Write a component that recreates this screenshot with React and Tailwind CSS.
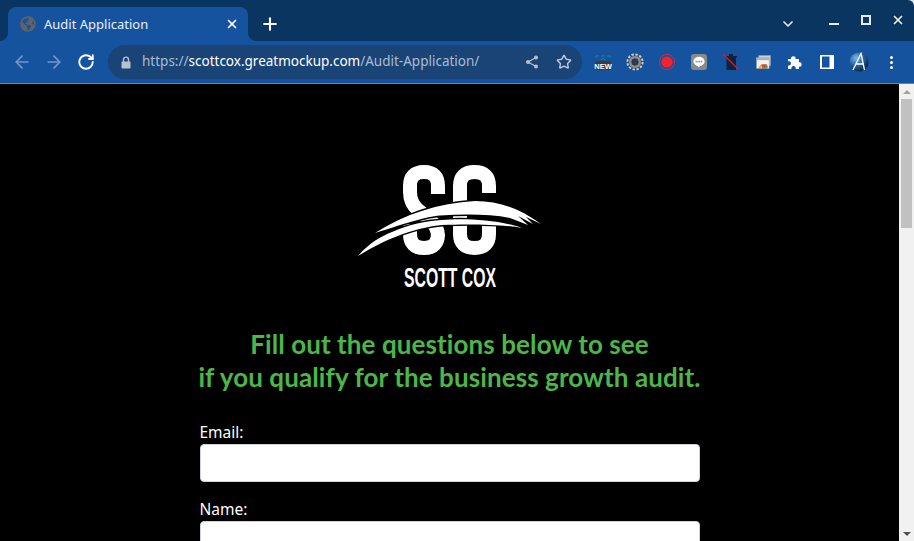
import React from 'react'
import { ArrowLeft, ArrowRight, RotateCw, Star, X, Plus, ChevronDown } from 'lucide-react'
import { FaGlobeAmericas } from 'react-icons/fa'

const uiFont = 'font-["Noto_Sans",sans-serif]'

const LockIcon = () => (
  <svg width="10" height="13" viewBox="0 0 10 13">
    <path d="M2.5 6V3.6a2.5 2.5 0 0 1 5 0V6" fill="none" stroke="#b6c2d2" strokeWidth="1.4" />
    <rect x="0.5" y="5.5" width="9" height="7" rx="1" fill="#b6c2d2" />
  </svg>
)

const ShareIcon = () => (
  <svg width="14" height="14" viewBox="0 0 14 14">
    <path d="M11 2.5 3 7l8 4.5" fill="none" stroke="#b6c2d2" strokeWidth="1.3" />
    <circle cx="11" cy="2.5" r="2" fill="#b6c2d2" />
    <circle cx="3" cy="7" r="2" fill="#b6c2d2" />
    <circle cx="11" cy="11.5" r="2" fill="#b6c2d2" />
  </svg>
)

const NewBadge = () => (
  <svg width="18" height="18" viewBox="0 0 18 18">
    <path d="M2 3h3M7 3h4M13 3h3M2 3v2M16 3v2M7 7l2-2 2 2" stroke="#1f7f9f" strokeWidth="1" fill="none" />
    <rect x="1" y="8" width="16" height="9" fill="#3c3c3c" />
    <text x="9" y="15.5" textAnchor="middle" fontSize="7.5" fontWeight="700" fill="#fff" fontFamily="Liberation Sans, sans-serif">NEW</text>
  </svg>
)

const Gear = () => (
  <svg width="18" height="18" viewBox="0 0 18 18">
    <circle cx="9" cy="9" r="6.5" fill="#8f8f8f" stroke="#444" strokeWidth="1" />
    <circle cx="9" cy="9" r="7.6" fill="none" stroke="#c8c8c8" strokeWidth="2" strokeDasharray="2.4 1.6" />
    <circle cx="9" cy="9" r="3.2" fill="#1d3f6a" stroke="#333" strokeWidth="1" />
  </svg>
)

const RecordDot = () => (
  <svg width="18" height="18" viewBox="0 0 18 18">
    <circle cx="9" cy="9" r="7.6" fill="none" stroke="#d8283a" strokeWidth="1" />
    <circle cx="9" cy="9" r="5.6" fill="#f5222d" />
  </svg>
)

const LineChat = () => (
  <svg width="16" height="16" viewBox="0 0 16 16">
    <rect width="16" height="16" rx="3" fill="#8a8a8a" />
    <ellipse cx="8" cy="7.4" rx="5.6" ry="4.6" fill="#fff" />
    <path d="M6.5 11l1 2.6 2.6-2.8z" fill="#fff" />
    <path d="M4.6 7.6h6.8" stroke="#8a8a8a" strokeWidth="1.6" strokeDasharray="1.2 .6" />
  </svg>
)

const TrashOff = () => (
  <svg width="18" height="18" viewBox="0 0 18 18">
    <path d="M4.5 4.5h9.5V17H4.5z M3 3h12v1.6H3z M7 1h4v2H7z" fill="#0f2238" />
    <path d="M1 1l15.5 15.5" stroke="#f01030" strokeWidth="1.2" />
  </svg>
)

const ChromeWindows = () => (
  <svg width="15" height="14" viewBox="0 0 16 15">
    <rect x="3" y="0.5" width="12.5" height="11" fill="#cfcfcf" stroke="#999" strokeWidth=".5" />
    <rect x="0.5" y="3" width="13.5" height="11.5" fill="#f2f2f2" stroke="#9a9a9a" strokeWidth=".5" />
    <rect x="0.5" y="3" width="13.5" height="2.5" fill="#aab4bd" />
    <path d="M3.5 14.5a4 4 0 0 1 4-4.6l3.8.1a4 4 0 0 1 .2 4.5z" fill="#e3402f" />
    <path d="M3.5 14.5a4 4 0 0 1 2-4l2 4z" fill="#f4c20d" />
    <path d="M8.5 14.5l2.8-4.4a4 4 0 0 1 .6 4.4z" fill="#3aa757" />
    <circle cx="7.7" cy="13.9" r="1.4" fill="#4a90e2" />
  </svg>
)

const PuzzleIcon = () => (
  <svg width="16" height="16" viewBox="0 0 16 16">
    <path d="M1 5h3.2a2.2 2.2 0 1 1 4.3 0H12v3.3a2.2 2.2 0 1 1 0 4.3V15H8.6a2.2 2.2 0 1 0-4.1 0H1v-3.6a2.2 2.2 0 1 0 0-4.1z" fill="#fff" />
  </svg>
)

const SidePanel = () => (
  <svg width="14" height="14" viewBox="0 0 14 14">
    <path d="M0 0h14v14H0z M2 1.5v11h7.5v-11z" fill="#fff" fillRule="evenodd" />
  </svg>
)

const Avatar = () => (
  <svg width="20" height="20" viewBox="0 0 20 20">
    <defs>
      <radialGradient id="globe" cx="35%" cy="30%" r="75%">
        <stop offset="0%" stopColor="#7fb6e6" />
        <stop offset="55%" stopColor="#1f5f9f" />
        <stop offset="100%" stopColor="#0d2238" />
      </radialGradient>
    </defs>
    <circle cx="10" cy="10" r="9.6" fill="url(#globe)" />
    <path d="M4 18 12 1.5 15.5 18M7.5 12h7.5" stroke="#fff" strokeWidth="1.3" fill="none" />
  </svg>
)

const Logo = () => (
  <svg width="200" height="138" viewBox="0 0 200 138" className="block shrink-0">
    <g fill="none" stroke="#fff" strokeWidth="14">
      <path d="M88 34V26Q88 12 74 12Q60 12 60 26V32Q60 43 68 50L80 60Q88 67 88 76V74Q88 88 74 88Q60 88 60 74V64" />
      <path d="M139 33V26Q139 12 124.5 12Q110 12 110 26V74Q110 88 124.5 88Q139 88 139 74V64" />
    </g>
    <g fill="#fff" stroke="#000" strokeWidth="3" paintOrder="stroke">
      <path d="M25 73C55 54 88 43 125 41C150 41 170 49 191 64L176 57L183 64L168 56L178 65L160 58C140 54 115 54 90 55.500C75 57 60 62 25 73Z" />
      <path d="M8 96C20 82 32 76 42 72C60 64 75 61 92 60C115 58 150 60 172 68C150 64 115 64 92 65C70 67 40 76 8 96Z" />
    </g>
    <text transform="translate(100 127) scale(0.79 1.4)" textAnchor="middle" fontSize="20" fontWeight="700" fill="#fff" fontFamily="Liberation Sans, sans-serif">SCOTT COX</text>
  </svg>
)

const extensions = [NewBadge, Gear, RecordDot, LineChat, TrashOff, ChromeWindows, PuzzleIcon, SidePanel, Avatar]

const Field = ({ label }) => (
  <div className="mb-[15px]">
    <label className={`block text-[15.5px] leading-[24px] text-white ${uiFont}`}>{label}</label>
    <input className="block w-full h-[38px] bg-white rounded border border-[#ced4da]" />
  </div>
)

const App = () => {
  return (
    <div className={`w-[914px] h-[541px] overflow-hidden flex flex-col bg-[#dfe5ec] ${uiFont}`}>
      <div className="h-[41px] shrink-0 bg-[#0b3561] rounded-tr-md flex items-end pl-2">
        <div className="relative w-[240px] h-[34px] bg-[#15539e] rounded-t-lg flex items-center pl-3 pr-2 text-white">
          <div className="absolute -left-2 bottom-0 w-2 h-2 bg-[#15539e]"><div className="w-2 h-2 bg-[#0b3561] rounded-br-lg" /></div>
          <div className="absolute -right-2 bottom-0 w-2 h-2 bg-[#15539e]"><div className="w-2 h-2 bg-[#0b3561] rounded-bl-lg" /></div>
          <FaGlobeAmericas className="w-4 h-4 text-[#5f6368]" />
          <span className="ml-2 text-[13px] pt-px flex-1 text-[#e8eef6]">Audit Application</span>
          <X className="w-[14px] h-[14px] mr-px" strokeWidth={3} />
        </div>
        <div className="ml-2 w-7 h-8 self-start mt-2 flex items-center justify-center text-white">
          <Plus className="w-5 h-5" strokeWidth={2.5} />
        </div>
        <div className="ml-auto self-start mt-2 h-8 flex items-center text-[#e8eaed]">
          <div className="w-8 mr-[14px] flex justify-center"><ChevronDown className="w-4 h-4" strokeWidth={2.5} /></div>
          <div className="w-8 flex justify-center"><div className="w-[10px] h-[2px] bg-[#e8eaed]" /></div>
          <div className="w-8 flex justify-center -translate-y-1"><div className="w-[10px] h-[10px] border-2 border-[#e8eaed]" /></div>
          <div className="w-8 flex justify-center -translate-y-1"><X className="w-[14px] h-[14px]" strokeWidth={3} /></div>
        </div>
      </div>

      <div className="h-[43px] shrink-0 bg-[#15539e] border-b border-[#5b86bb] flex items-center pl-[6px]">
        <div className="w-8 flex justify-center text-[#7198c8]"><ArrowLeft className="w-5 h-5" /></div>
        <div className="w-8 flex justify-center text-[#7198c8]"><ArrowRight className="w-5 h-5" /></div>
        <div className="w-8 flex justify-center text-white"><RotateCw className="w-[18px] h-[18px]" strokeWidth={2.5} /></div>
        <div className="ml-[6px] w-[474px] h-[34px] rounded-full bg-[#1a4376] flex items-center pl-[13px] pr-[10px]">
          <LockIcon />
          <span className="ml-[11px] pb-px text-[13.5px] flex-1 whitespace-nowrap text-[#a9bcd3]">
            https://<span className="text-white">scottcox.greatmockup.com</span>/Audit-Application/
          </span>
          <ShareIcon />
          <Star className="ml-[17px] w-4 h-4 text-[#c7d0dc]" strokeWidth={2} />
        </div>
        <div className="ml-[5px] flex items-center">
          {extensions.map((Icon, i) => (
            <div key={i} className="w-8 h-8 flex items-center justify-center"><Icon /></div>
          ))}
          <div className="w-8 h-8 flex flex-col items-center justify-center gap-[2px]">
            <div className="w-[3px] h-[3px] rounded-full bg-white" />
            <div className="w-[3px] h-[3px] rounded-full bg-white" />
            <div className="w-[3px] h-[3px] rounded-full bg-white" />
          </div>
        </div>
      </div>

      <div className="flex-1 flex min-h-0 bg-black">
        <main className="flex-1 min-w-0 overflow-hidden flex flex-col items-center pt-[76px]">
          <Logo />
          <h1 className={`shrink-0 mt-[30px] text-center text-[26px] leading-[33px] tracking-[0.09px] font-bold text-[#4cb648] font-["Lato",sans-serif]`}>
            Fill out the questions below to see<br />if you qualify for the business growth audit.
          </h1>
          <form className="shrink-0 mt-[26px] w-[500px]">
            <Field label="Email:" />
            <Field label="Name:" />
          </form>
        </main>
        <div className="w-[15px] shrink-0 bg-[#f1f1f1] flex flex-col items-center">
          <div className="h-[15px] flex items-center justify-center">
            <div className="w-0 h-0 border-x-[4px] border-x-transparent border-b-[4px] border-b-[#a3a3a3]" />
          </div>
          <div className="w-[11px] h-[129px] bg-[#c1c1c1]" />
          <div className="mt-auto h-[15px] flex items-center justify-center">
            <div className="w-0 h-0 border-x-[4px] border-x-transparent border-t-[4px] border-t-[#505050]" />
          </div>
        </div>
      </div>
    </div>
  )
}

export default App
